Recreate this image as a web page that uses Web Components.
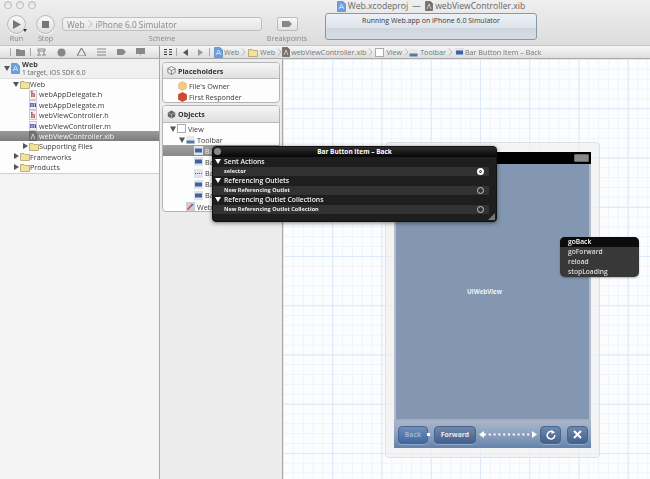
<!DOCTYPE html>
<html lang="en">
<head>
<meta charset="UTF-8">
<title>Web.xcodeproj</title>
<style>
  html, body { margin: 0; height: 100%; overflow: hidden; background: #ececec; }
  body { width: 650px; height: 479px; font-family: "Open Sans", "Liberation Sans", sans-serif; color: #333; }
  x-app { filter: blur(0.35px); }
</style>
</head>
<body>

<x-app>
  <x-toolbar slot="top"></x-toolbar>
  <x-jumpbar slot="top"></x-jumpbar>

  <x-navigator slot="left">
    <tree-row depth="0" arrow="open" icon="project" tall sub="1 target, iOS SDK 6.0"><b>Web</b></tree-row>
    <tree-row depth="1" arrow="open" icon="folder">Web</tree-row>
    <tree-row depth="2" icon="h">webAppDelegate.h</tree-row>
    <tree-row depth="2" icon="m">webAppDelegate.m</tree-row>
    <tree-row depth="2" icon="h">webViewController.h</tree-row>
    <tree-row depth="2" icon="m">webViewController.m</tree-row>
    <tree-row depth="2" icon="xib" selected>webViewController.xib</tree-row>
    <tree-row depth="2" arrow="closed" icon="folder">Supporting Files</tree-row>
    <tree-row depth="1" arrow="closed" icon="folder">Frameworks</tree-row>
    <tree-row depth="1" arrow="closed" icon="folder">Products</tree-row>
  </x-navigator>

  <x-dock slot="left">
    <dock-panel title="Placeholders" icon="cube">
      <dock-row icon="owner" indent="15">File's Owner</dock-row>
      <dock-row icon="responder" indent="15">First Responder</dock-row>
    </dock-panel>
    <dock-panel title="Objects" icon="box" grow>
      <dock-row arrow icon="view" indent="7">View</dock-row>
      <dock-row arrow icon="bar" indent="16">Toolbar</dock-row>
      <dock-row icon="item" indent="31" selected>Ba</dock-row>
      <dock-row icon="item" indent="31">Ba</dock-row>
      <dock-row icon="flex" indent="31">Ba</dock-row>
      <dock-row icon="item" indent="31">Ba</dock-row>
      <dock-row icon="item" indent="31">Ba</dock-row>
      <dock-row icon="web" indent="23">Web</dock-row>
    </dock-panel>
  </x-dock>

  <x-canvas slot="main">
    <x-phone></x-phone>
  </x-canvas>

  <connection-popup slot="over" title="Bar Button Item – Back">
    <conn-section title="Sent Actions"><conn-item on>selector</conn-item></conn-section>
    <conn-section title="Referencing Outlets"><conn-item>New Referencing Outlet</conn-item></conn-section>
    <conn-section title="Referencing Outlet Collections"><conn-item>New Referencing Outlet Collection</conn-item></conn-section>
  </connection-popup>

  <method-menu slot="over">
    <method-item active>goBack</method-item>
    <method-item>goForward</method-item>
    <method-item>reload</method-item>
    <method-item>stopLoading</method-item>
  </method-menu>
</x-app>

<script>
// small icons, all drawn by hand
const ICONS = {
  folder: '<svg width="10" height="9" viewBox="0 0 10 9"><path d="M.5 1.500h3.500l1 1h4.500v6h-9z" fill="#ecd78a" stroke="#a8985c" stroke-width=".7"/><rect x="1" y="3" width="8" height="5" fill="#f2e2a0"/></svg>',
  project: '<svg width="9" height="11" viewBox="0 0 9 11"><path d="M.5.5h5.500l2.500 2.500v7.500h-8z" fill="#6d9fe0" stroke="#4a78b5" stroke-width=".6"/><path d="M2 8l2.500-5 2.500 5M3 6.500h3" fill="none" stroke="#dce9f8" stroke-width=".8"/></svg>',
  xib: '<svg width="8" height="10" viewBox="0 0 8 10"><path d="M.5.500h5l2 2v7h-7z" fill="#77726c" stroke="#55504b" stroke-width=".6"/><path d="M2 8l2-5 2 5" fill="none" stroke="#ddd" stroke-width=".8"/></svg>',
  view: '<svg width="9" height="9" viewBox="0 0 9 9"><rect x=".5" y=".5" width="8" height="8" fill="#fff" stroke="#aaa"/></svg>',
  bar: '<svg width="9" height="9" viewBox="0 0 9 9"><rect x=".5" y="1" width="8" height="7.500" fill="#e8e8e8"/><rect x=".5" y="5.500" width="8" height="3" fill="#5578a8"/></svg>',
  item: '<svg width="9" height="9" viewBox="0 0 9 9"><rect width="9" height="9" fill="#dfe4ec"/><rect x="1" y="2.500" width="7" height="4" fill="#3d63a0"/></svg>',
  flex: '<svg width="9" height="9" viewBox="0 0 9 9"><rect width="9" height="9" fill="#dfe4ec"/><path d="M1 4.500h7" stroke="#3d63a0" stroke-dasharray="1 1"/></svg>',
  web: '<svg width="9" height="9" viewBox="0 0 9 9"><rect width="9" height="9" fill="#c8cedb"/><path d="M1.500 7.500l5-5" stroke="#d13b2e" stroke-width="1.200"/><path d="M5 1.500l2.500 1-1 1" fill="#3d63a0"/></svg>',
  owner: '<svg width="9" height="10" viewBox="0 0 9 10"><path d="M4.500.5l4 2v5l-4 2-4-2v-5z" fill="#f3c98b" stroke="#e0a050" stroke-width=".6" stroke-dasharray="1 .6"/></svg>',
  responder: '<svg width="9" height="10" viewBox="0 0 9 10"><path d="M4.500.5l4 2v5l-4 2-4-2v-5z" fill="#d2492d" stroke="#a83018" stroke-width=".6"/></svg>',
  cube: '<svg width="9" height="9" viewBox="0 0 9 9"><path d="M4.500.5l3.700 2v4l-3.700 2-3.700-2v-4zM.8 2.500l3.700 2 3.700-2M4.500 4.500v4" fill="none" stroke="#666" stroke-width=".7"/></svg>',
  box: '<svg width="9" height="9" viewBox="0 0 9 9"><path d="M4.500.5l3.700 2v4l-3.700 2-3.700-2v-4z" fill="#666"/><path d="M.8 2.500l3.700 2 3.700-2M4.500 4.500v4" fill="none" stroke="#ddd" stroke-width=".5"/></svg>'
};
const LETTER = c => `<span style="display:inline-flex;width:8px;height:10px;align-items:center;justify-content:center;background:#f4f2f0;border:1px solid #ccc;box-sizing:border-box;font:bold 8px 'Liberation Serif',serif;color:${c === 'h' ? '#a33' : '#33a'}">${c}</span>`;
const iconHtml = n => (n === 'h' || n === 'm') ? LETTER(n) : (ICONS[n] || '');
const chevron = (w = 9) => `<svg width="${w}" height="8" style="flex:none"><path d="M3 .5l3 3.500-3 3.500" fill="none" stroke="#aaa" stroke-width=".8"/></svg>`;

function shadow(el, html) {
  el.attachShadow({mode: 'open'}).innerHTML = html;
}

class XApp extends HTMLElement {
  connectedCallback() {
    shadow(this, `<style>
      :host { display: flex; flex-direction: column; width: 650px; height: 479px; position: relative; overflow: hidden; }
      .body { flex: 1; display: flex; min-height: 0; }
    </style>
    <slot name="top"></slot>
    <div class="body"><slot name="left"></slot><slot name="main"></slot></div>
    <slot name="over"></slot>`);
  }
}

class XToolbar extends HTMLElement {
  connectedCallback() {
    shadow(this, `<style>
      :host { display: flex; height: 45px; flex: none; background: linear-gradient(#efefef, #dcdcdc); font-size: 7.200px; color: #888; }
      .left { width: 325px; flex: none; display: flex; flex-direction: column; box-sizing: border-box; padding: 0 0 0 4px; }
      .lights { display: flex; gap: 4px; height: 10px; align-items: center; }
      .lights i { width: 6px; height: 6px; border-radius: 50%; border: 1px solid #b8b8b8; background: linear-gradient(#ddd, #f8f8f8); }
      .controls { display: flex; margin-top: 5px; height: 28px; }
      .ctl { display: flex; flex-direction: column; align-items: center; position: relative; flex: none; }
      .round { width: 19px; height: 19px; border-radius: 50%; box-sizing: border-box; border: 1px solid #b8b8b8; background: linear-gradient(#f8f8f8, #dedede); display: flex; align-items: center; justify-content: center; box-shadow: 0 1px 0 #fff; }
      .lbl { line-height: 9px; white-space: nowrap; }
      .run { width: 19px; margin-left: 3px; }
      .stop { width: 19px; margin-left: 10px; }
      .scheme { width: 200px; margin-left: 7px; }
      .box { box-sizing: border-box; height: 14px; margin-top: 2px; width: 100%; border: 1px solid #c0c0c0; border-radius: 3px; background: linear-gradient(#f4f4f4, #e6e6e6); color: #888; font-size: 8.400px; padding-left: 4px; white-space: nowrap; display: flex; align-items: center; }
      .box svg { margin: 0 1px; }
      .bp { width: 40px; margin-left: 5px; }
      .bpbtn { box-sizing: border-box; width: 21px; height: 14px; margin-top: 2px; border: 1px solid #bbb; border-radius: 2px; background: linear-gradient(#f8f8f8, #e2e2e2); display: flex; align-items: center; justify-content: center; }
      .bp .lbl, .scheme .lbl { margin-top: 3px; }
      .caret { position: absolute; right: -1px; top: 14px; border: 2px solid transparent; border-top: 3px solid #333; }
      .mid { width: 212px; flex: none; display: flex; flex-direction: column; align-items: center; }
      .title { height: 12.500px; line-height: 12px; font-size: 8.600px; color: #666; display: flex; gap: 2px; align-items: center; white-space: nowrap; }
      .status { box-sizing: border-box; width: 212px; height: 27px; border: 1px solid #8a98a6; border-radius: 3px; background: linear-gradient(#edf1f5, #dde3ea 55%, #cfd6de 56%, #d8dee5); color: #3a3a3a; font-size: 7px; text-align: center; line-height: 13px; }
    </style>
    <div class="left">
      <div class="lights"><i></i><i></i><i></i></div>
      <div class="controls">
        <div class="ctl run"><div class="round"><svg width="8" height="9"><path d="M0 0l8 4.500-8 4.500z" fill="#777"/></svg></div><span class="lbl">Run</span><i class="caret"></i></div>
        <div class="ctl stop"><div class="round"><svg width="7" height="7"><rect width="7" height="7" fill="#777"/></svg></div><span class="lbl">Stop</span></div>
        <div class="ctl scheme"><div class="box"><span>Web</span>${chevron()}<span>iPhone 6.0 Simulator</span></div><span class="lbl">Scheme</span></div>
        <div class="ctl bp"><div class="bpbtn"><svg width="10" height="6"><path d="M0 0h7l3 3-3 3H0z" fill="#888"/></svg></div><span class="lbl">Breakpoints</span></div>
      </div>
    </div>
    <div class="mid">
      <div class="title">${ICONS.project}<span>Web.xcodeproj</span><span>&nbsp;—&nbsp;</span>${ICONS.xib}<span>webViewController.xib</span></div>
      <div class="status">Running Web.app on iPhone 6.0 Simulator</div>
    </div>`);
  }
}

class XJumpbar extends HTMLElement {
  connectedCallback() {
    const g = '#888';
    const tabs = [
      `<svg width="9" height="8"><path d="M0 1h3l1 1h5v6H0z" fill="${g}"/></svg>`,
      `<svg width="9" height="8"><path d="M1 1h7M1 1v2h7V1M2 3v4M7 3v4M0 7h4M5 7h4" stroke="${g}" fill="none"/></svg>`,
      `<svg width="9" height="9"><circle cx="4.500" cy="4.500" r="4" fill="${g}"/></svg>`,
      `<svg width="9" height="8"><path d="M4.500 0l4.500 8H0z" fill="none" stroke="${g}" stroke-width="1.200"/></svg>`,
      `<svg width="9" height="8"><path d="M0 1h9M0 4h9M0 7h9" stroke="${g}"/></svg>`,
      `<svg width="9" height="6"><path d="M0 0h6l3 3-3 3H0z" fill="${g}"/></svg>`,
      `<svg width="9" height="8"><path d="M0 0h9v6H5L4 8V6H0z" fill="${g}"/></svg>`
    ];
    shadow(this, `<style>
      :host { display: flex; height: 14px; flex: none; box-sizing: border-box; background: linear-gradient(#f6f6f6, #dedede); border-top: 1px solid #c4c4c4; border-bottom: 1px solid #aaa; font-size: 7.200px; color: #777; align-items: center; }
      .tabs { width: 160px; flex: none; box-sizing: border-box; display: flex; align-items: center; border-right: 1px solid #999; height: 100%; padding-left: 10px; }
      .tabs span { width: 19.800px; display: flex; justify-content: center; }
      .tabs span:first-child { width: 19px; border-left: 1px solid #aaa; border-right: 1px solid #aaa; margin-right: 1px; }
      .crumbs { display: flex; align-items: center; white-space: nowrap; padding-left: 4px; }
      .sep { width: 1px; height: 8px; background: #aaa; margin: 0 4px; }
      .c { display: inline-flex; align-items: center; gap: 1px; }
      .c svg { flex: none; }
      svg { display: block; }
    </style>
    <div class="tabs">${tabs.map(t => `<span>${t}</span>`).join('')}</div>
    <div class="crumbs">
      <svg width="8" height="6"><path d="M0 .5h3M5 .5h3M0 3h3M5 3h3M0 5.500h3M5 5.500h3" stroke="#333"/></svg>
      <i class="sep"></i>
      <svg width="10" height="7" style="margin-left:1px"><path d="M6 0v7L1 3.500z" fill="#555"/></svg>
      <svg width="10" height="7" style="margin-left:3px"><path d="M3 0v7l5-3.500z" fill="#999"/></svg>
      <i class="sep"></i>
      <span class="c">${ICONS.project}Web</span>${chevron()}
      <span class="c" style="gap:2px">${ICONS.folder}Web</span>${chevron(7)}
      <span class="c">${ICONS.xib}webViewController.xib</span>${chevron()}
      <span class="c" style="gap:2px">${ICONS.view}View</span>${chevron(7)}
      <span class="c" style="gap:2px">${ICONS.bar}Toolbar</span>${chevron()}
      <span class="c">${ICONS.item}Bar Button Item – Back</span>
    </div>`);
  }
}

class XNavigator extends HTMLElement {
  connectedCallback() {
    shadow(this, `<style>
      :host { display: block; width: 160px; flex: none; box-sizing: border-box; background: #f3f3f3; border-right: 1px solid #aaa; }
      .list { background: #fdfdfd; border-bottom: 1px solid #d0d0d0; }
    </style><div class="list"><slot></slot></div>`);
  }
}

class TreeRow extends HTMLElement {
  connectedCallback() {
    const depth = +this.getAttribute('depth');
    const arrow = this.getAttribute('arrow');
    const tri = arrow === 'open' ? '<path d="M0 1h6L3 6z" fill="#555"/>' : arrow === 'closed' ? '<path d="M1 0l5 3-5 3z" fill="#555"/>' : '';
    const sub = this.getAttribute('sub');
    const tall = this.hasAttribute('tall');
    shadow(this, `<style>
      :host { display: flex; align-items: center; height: 10.400px; font-size: 7.200px; color: #3c3c3c; white-space: nowrap; box-sizing: border-box; padding-left: ${4 + depth * 9}px; }
      :host([tall]) { height: 20px; background: #f0f0f0; border-bottom: 1px solid #ddd; }
      :host([selected]) { background: linear-gradient(#9a9a9a, #7d7d7d); color: #f4f4f4; }
      .a { width: 6px; flex: none; margin-right: 1px; display: flex; }
      .i { width: 10px; flex: none; display: flex; justify-content: flex-start; }
      :host([tall]) .i { width: 11px; }
      .t { display: flex; flex-direction: column; line-height: 8.500px; }
      .s { color: #666; font-size: 6.700px; }
    </style>
    <span class="a"><svg width="6" height="7">${tri}</svg></span>
    <span class="i">${iconHtml(this.getAttribute('icon'))}</span>
    <span class="t"><span><slot></slot></span>${tall ? `<span class="s">${sub}</span>` : ''}</span>`);
  }
}

class XDock extends HTMLElement {
  connectedCallback() {
    shadow(this, `<style>
      :host { display: flex; flex-direction: column; width: 122px; flex: none; box-sizing: border-box; height: 153px; gap: 2px; padding: 3px 2px 0 2px; }
    </style><slot></slot>`);
  }
}

class DockPanel extends HTMLElement {
  connectedCallback() {
    shadow(this, `<style>
      :host { display: block; box-sizing: border-box; border: 1px solid #b4b4b4; border-radius: 4px; background: #fdfdfd; overflow: hidden; height: 41px; flex: none; }
      :host([grow]) { flex: 1; height: auto; }
      .head { height: 16px; box-sizing: border-box; display: flex; align-items: center; gap: 2px; padding-left: 4px; font-size: 7.100px; font-weight: 700; color: #333; background: linear-gradient(#f6f6f6, #e0e0e0); border-bottom: 1px solid #bbb; }
      :host([grow]) .head { height: 17px; }
      .rows { padding-top: 1px; }
      :host([grow]) .rows { padding-top: 0; }
    </style>
    <div class="head">${ICONS[this.getAttribute('icon')]}<span>${this.getAttribute('title')}</span></div>
    <div class="rows"><slot></slot></div>`);
  }
}

class DockRow extends HTMLElement {
  connectedCallback() {
    const indent = +this.getAttribute('indent');
    shadow(this, `<style>
      :host { display: flex; align-items: center; height: 11.150px; font-size: 7.200px; color: #3c3c3c; white-space: nowrap; overflow: hidden; padding-left: ${indent}px; }
      :host([selected]) { background: linear-gradient(#a2a2a2, #888); color: #eee; }
      .a { width: 6px; margin-right: 1px; display: flex; }
      .i { display: flex; margin-right: 2px; flex: none; }
    </style>
    ${this.hasAttribute('arrow') ? '<span class="a"><svg width="6" height="6"><path d="M0 .5h6L3 6z" fill="#555"/></svg></span>' : ''}
    <span class="i">${iconHtml(this.getAttribute('icon'))}</span><slot></slot>`);
  }
}

class XCanvas extends HTMLElement {
  connectedCallback() {
    shadow(this, `<style>
      :host { display: block; flex: 1; position: relative; overflow: hidden; box-sizing: border-box; border-left: 1px solid #a8a8a8;
        background-color: #fcfdff;
        background-image:
          linear-gradient(90deg, #dde8f8 1px, transparent 1px),
          linear-gradient(#dde8f8 1px, transparent 1px),
          linear-gradient(90deg, #eff3fa 1px, transparent 1px),
          linear-gradient(#eff3fa 1px, transparent 1px);
        background-size: 49.250px 49.250px, 49.250px 49.250px, 9.850px 9.850px, 9.850px 9.850px; }
    </style><slot></slot>`);
  }
}

// the iPhone view lies on the free canvas of the xib editor
class XPhone extends HTMLElement {
  connectedCallback() {
    shadow(this, `<style>
      :host { position: absolute; left: 102px; top: 83px; width: 215px; height: 316px; box-sizing: border-box; padding: 9px 8px; background: rgba(240,240,240,.65); border: 1px solid #e0e0e0; border-radius: 4px; display: flex; }
      .screen { flex: 1; display: flex; flex-direction: column; }
      .status { height: 12px; background: #000; display: flex; justify-content: flex-end; align-items: center; padding-right: 2px; flex: none; }
      .status i { width: 13px; height: 6px; background: #888; border: 1px solid #666; border-radius: 1px; }
      .web { flex: 1; background: #8397b3; border: 2px solid #b4bcc8; border-top: 0; border-bottom-color: #aab; display: flex; align-items: center; justify-content: center; color: #eef1f5; font: 700 6.200px "Open Sans", sans-serif; padding-right: 16px; }
      .bar { height: 27px; flex: none; display: flex; align-items: center; padding-left: 4px; box-sizing: border-box; background: linear-gradient(#a7b6cb, #8ca0bd 50%, #6382ab); font: 700 6.800px "Open Sans", sans-serif; color: #e8e8e8; }
      .b { height: 18px; box-sizing: border-box; border: 1px solid #4a648c; border-radius: 4px; display: flex; align-items: center; justify-content: center; background: linear-gradient(#6f87ab, #43628f); box-shadow: 0 1px 0 rgba(255,255,255,.25); flex: none; }
      .back { width: 30px; color: #9fb3d0; background: linear-gradient(#6f8ebb, #3f679f); }
      .sq { width: 3px; height: 3px; background: #fff; margin: 0 4px 0 -1px; flex: none; z-index: 1; }
      .fwd { width: 42px; }
      .arrow { width: 58px; margin: 0 3px; flex: none; }
      .ic { width: 21px; }
      svg { display: block; }
    </style>
    <div class="screen">
      <div class="status"><i></i></div>
      <div class="web">UIWebView</div>
      <div class="bar">
        <div class="b back">Back</div><i class="sq"></i>
        <div class="b fwd">Forward</div>
        <svg class="arrow" width="58" height="9"><path d="M0 4.500L5 1v7zM58 4.500L53 1v7z" fill="#fff"/><path d="M5 4.500h48" stroke="#fff" stroke-width="2" stroke-dasharray="2 2.800"/></svg>
        <div class="b ic"><svg width="10" height="10" viewBox="0 0 10 10"><path d="M7.500 2.300A3.800 3.800 0 1 0 8.800 5" fill="none" stroke="#fff" stroke-width="1.500"/><path d="M5.500 0l3.500 2.500-3.500 1.500z" fill="#fff"/></svg></div>
        <div class="b ic" style="margin-left:6px"><svg width="9" height="9"><path d="M1 1l7 7M8 1l-7 7" stroke="#fff" stroke-width="2"/></svg></div>
      </div>
    </div>`);
  }
}

class ConnectionPopup extends HTMLElement {
  connectedCallback() {
    shadow(this, `<style>
      :host { position: absolute; left: 212px; top: 146px; width: 285px; height: 76px; box-sizing: border-box; border-radius: 4px; background: #1e1e1e; border: 1px solid #111; box-shadow: 0 1px 4px rgba(0,0,0,.5); color: #fff; font-size: 7px; overflow: hidden; }
      .title { height: 10px; line-height: 10px; text-align: center; font-weight: 700; font-size: 6.500px; background: linear-gradient(#2e2e2e, #050505); position: relative; }
      .x { position: absolute; left: 1px; top: 1px; width: 7px; height: 7px; border-radius: 50%; background: #888; }
      .grip { position: absolute; right: 1px; bottom: 1px; }
    </style>
    <div class="title"><i class="x"></i>${this.getAttribute('title')}</div>
    <slot></slot>
    <svg class="grip" width="7" height="7"><path d="M7 0v7H0z" fill="#777"/></svg>`);
  }
}

class ConnSection extends HTMLElement {
  connectedCallback() {
    shadow(this, `<style>
      :host { display: block; }
      .h { height: 9.500px; line-height: 9.500px; display: flex; align-items: center; gap: 3px; padding-left: 2px; font-weight: 600; font-size: 6.800px; color: #f2f2f2; white-space: nowrap; }
    </style>
    <div class="h"><svg width="6" height="5"><path d="M0 0h6L3 5z" fill="#fff"/></svg>${this.getAttribute('title')}</div>
    <slot></slot>`);
  }
}

class ConnItem extends HTMLElement {
  connectedCallback() {
    const on = this.hasAttribute('on');
    shadow(this, `<style>
      :host { display: flex; align-items: center; justify-content: space-between; height: 9.500px; background: #323232; margin-right: 7px; padding: 0 4px 0 11px; font-size: 5.500px; font-weight: 700; color: #eee; white-space: nowrap; }
      i { width: 7px; height: 7px; box-sizing: border-box; border-radius: 50%; border: 1px solid #ccc; display: block; margin-right: 1px; }
      i.on { background: #fff; border: 2px solid #fff; box-shadow: inset 0 0 0 1px #333; }
    </style><slot></slot><i class="${on ? 'on' : ''}"></i>`);
  }
}

class MethodMenu extends HTMLElement {
  connectedCallback() {
    shadow(this, `<style>
      :host { position: absolute; left: 560px; top: 237px; width: 79px; height: 40px; box-sizing: border-box; border-radius: 5px; background: #383838; overflow: hidden; box-shadow: 0 1px 2px rgba(0,0,0,.3); }
    </style><slot></slot>`);
  }
}

class MethodItem extends HTMLElement {
  connectedCallback() {
    shadow(this, `<style>
      :host { display: block; height: 10px; line-height: 10px; padding-left: 8px; font-size: 6.700px; font-weight: 600; color: #ddd; }
      :host([active]) { background: #0c0c0c; color: #fff; }
    </style><slot></slot>`);
  }
}

customElements.define('x-app', XApp);
customElements.define('x-toolbar', XToolbar);
customElements.define('x-jumpbar', XJumpbar);
customElements.define('x-navigator', XNavigator);
customElements.define('tree-row', TreeRow);
customElements.define('x-dock', XDock);
customElements.define('dock-panel', DockPanel);
customElements.define('dock-row', DockRow);
customElements.define('x-canvas', XCanvas);
customElements.define('x-phone', XPhone);
customElements.define('connection-popup', ConnectionPopup);
customElements.define('conn-section', ConnSection);
customElements.define('conn-item', ConnItem);
customElements.define('method-menu', MethodMenu);
customElements.define('method-item', MethodItem);
</script>

</body>
</html>
